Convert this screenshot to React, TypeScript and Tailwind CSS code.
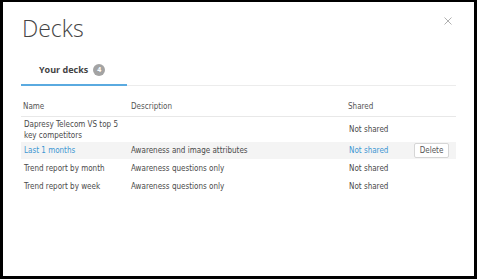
const DECKS = [
  { name: "Dapresy Telecom VS top 5 key competitors", description: "", shared: "Not shared", height: "h-[25px]" },
  { name: "Last 1 months", description: "Awareness and image attributes", shared: "Not shared", height: "h-[17px]", active: true },
  { name: "Trend report by month", description: "Awareness questions only", shared: "Not shared", height: "h-[18px]" },
  { name: "Trend report by week", description: "Awareness questions only", shared: "Not shared", height: "h-[18px]" },
];

const tableFont = { fontFamily: "'DejaVu Sans Condensed', 'Liberation Sans', sans-serif" };

export default function App() {
  return (
    <div className="w-[477px] h-[279px] bg-black pt-[2px] pl-[3px] pr-[3px] pb-[3px]">
      <div
        className="relative w-full h-full bg-white px-[18px] pt-[11px]"
        style={{ fontFamily: "'Open Sans', sans-serif" }}
      >
        {/* Close */}
        <button className="absolute top-[15px] right-[22px] w-[8px] h-[8px]" aria-label="Close">
          <svg width="8" height="8" viewBox="0 0 8 8" className="block">
            <path d="M0.5 0.5L7.5 7.5M7.5 0.5L0.5 7.5" stroke="#b0b0b0" strokeWidth="1" />
          </svg>
        </button>

        <h1 className="text-[23px] leading-[31px] font-light text-[#444] pl-[1px]">Decks</h1>

        {/* Tabs */}
        <div className="mt-[20px] flex border-b border-[#ececec]">
          <div className="flex items-center gap-[5px] pl-[18px] pr-[22px] pb-[8px] border-b-2 border-[#5aaae0] -mb-[1px]">
            <span className="text-[9px] leading-[12px] font-bold text-[#444]">Your decks</span>
            <span className="w-[12px] h-[12px] rounded-full bg-[#a3a3a3] text-white text-[7px] leading-[12px] font-bold text-center">
              4
            </span>
          </div>
        </div>

        {/* Table */}
        <div className="mt-[11px] text-[8px] text-[#4a4a4a]" style={tableFont}>
          <div className="grid grid-cols-[107px_217px_66px_1fr] h-[20px] items-center border-b border-[#e8e8e8] text-[#555]">
            <div className="pl-[2px]">Name</div>
            <div className="pl-[3px]">Description</div>
            <div className="pl-[3px]">Shared</div>
            <div />
          </div>
          {DECKS.map((deck) => (
            <div
              key={deck.name}
              className={`grid grid-cols-[107px_217px_66px_1fr] items-center leading-[11px] ${deck.height} ${
                deck.active ? "bg-[#f4f4f4]" : ""
              }`}
            >
              <div className={`pl-[3px] pr-[4px] ${deck.active ? "text-[#3d97d3]" : ""}`}>{deck.name}</div>
              <div className="pl-[3px]">{deck.description}</div>
              <div className={`pl-[4px] ${deck.active ? "text-[#3d97d3]" : ""}`}>{deck.shared}</div>
              <div className="pl-[3px]">
                {deck.active && (
                  <button className="w-[35px] h-[15px] bg-white border border-[#d6d6d6] rounded-[2px] text-[8px] leading-[13px] text-[#555]">
                    Delete
                  </button>
                )}
              </div>
            </div>
          ))}
        </div>
      </div>
    </div>
  );
}
